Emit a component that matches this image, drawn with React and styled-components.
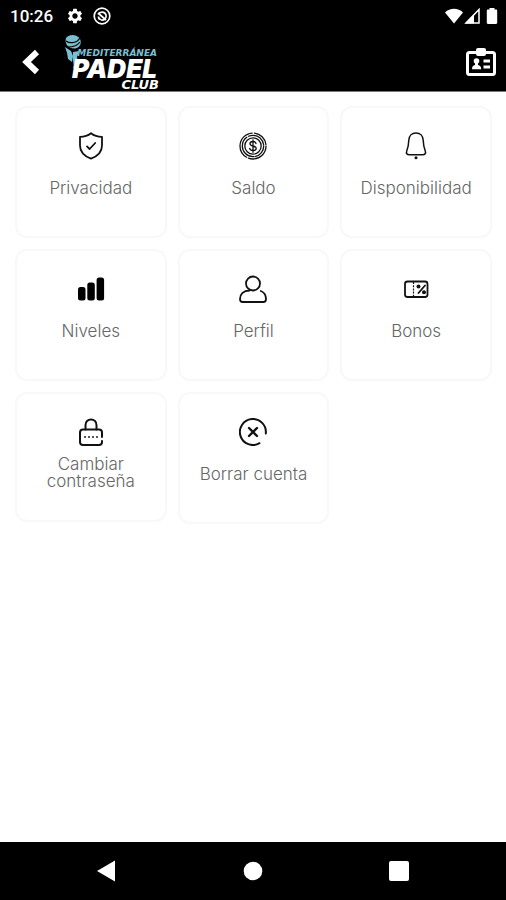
import styled, { createGlobalStyle } from "styled-components";
import { MdSettings } from "react-icons/md";

const GlobalStyle = createGlobalStyle`
  * {
    box-sizing: border-box;
  }
  body {
    margin: 0;
    background: #fff;
    font-family: Inter, "Liberation Sans", sans-serif;
  }
  button {
    border: 0;
    padding: 0;
    background: none;
    color: inherit;
    font: inherit;
    cursor: pointer;
  }
  svg {
    display: block;
  }
`;

const ShieldIcon = () => (
  <Icon viewBox="0 0 28 28">
    <path d="M14 1.200c3.200 2.600 6.800 3.600 11 3.600v8.700c0 6.200-4.200 10.600-11 13.200C7.200 24.100 3 19.700 3 13.500V4.800c4.200 0 7.800-1 11-3.600z" />
    <path d="M10 14.400l2.600 2.600 5.600-6" />
  </Icon>
);

const CoinIcon = () => (
  <Icon viewBox="0 0 28 28" $stroke={1.3}>
    <circle cx="14" cy="14" r="13" strokeDasharray="25 2 33 2.500 17 2.180" />
    <circle cx="14" cy="14" r="10.700" strokeDasharray="14 1.500 28 2 20 1.730" />
    <circle cx="14" cy="14" r="8.200" />
    <path d="M17 11.500c-.3-1.300-1.500-2-3-2-1.700 0-3 .8-3 2.200 0 3.200 6.200 1.400 6.200 4.600 0 1.400-1.400 2.300-3.200 2.300s-3-.8-3.300-2.200M14 7.800v12.500" />
  </Icon>
);

const BellIcon = () => (
  <Icon viewBox="0 0 28 28" $stroke={1.5}>
    <path d="M14 1c-4.300 0-7 3.200-7.200 7.200-.2 4.600-.6 7.200-2 10.600-1 2.500.2 4 2.600 4h13.200c2.400 0 3.600-1.500 2.600-4-1.400-3.400-1.800-6-2-10.600C21 4.200 18.300 1 14 1z" />
    <circle cx="14" cy="25.700" r="1.500" fill="currentColor" stroke="none" />
  </Icon>
);

const LevelsIcon = () => (
  <Icon viewBox="0 0 28 28">
    <g fill="#000" stroke="none">
      <rect x="1" y="12" width="7.500" height="13.500" rx="2.500" />
      <rect x="10.300" y="7.500" width="7.500" height="18" rx="2.500" />
      <rect x="19.600" y="2.500" width="7.500" height="23" rx="2.500" />
    </g>
  </Icon>
);

const ProfileIcon = () => (
  <Icon viewBox="0 0 28 28">
    <circle cx="14" cy="8.500" r="7" />
    <path d="M10.500 15.500C4.500 15.500 1 19 1 24c0 2 .8 3 2.600 3h20.800c1.800 0 2.600-1 2.600-3 0-3.800-1.800-6.700-5.200-8" />
  </Icon>
);

const VoucherIcon = () => (
  <Icon viewBox="0 0 28 28">
    <rect x="3" y="6.500" width="22.500" height="15.500" rx="2.500" />
    <path d="M11.500 7v15" strokeWidth="1.200" strokeDasharray="2 1.200" strokeLinecap="butt" />
    <path d="M16.500 18l6.500-7.500" />
    <g fill="currentColor" stroke="none">
      <circle cx="16.500" cy="11.500" r="2" />
      <circle cx="22" cy="17.200" r="2" />
    </g>
  </Icon>
);

const LockIcon = () => (
  <Icon viewBox="0 0 28 28" $stroke={2}>
    <path d="M8.500 11.500V7.200C8.500 3.700 10.800 1.500 14 1.500s5.500 2.200 5.500 5.700v4.300" />
    <path d="M25 19V14.500c0-2-1-3-3-3H6c-2 0-3 1-3 3V24c0 2 1 3 3 3h16c2 0 3-1 3-3v-1" />
    <path d="M7 19h14" strokeWidth="1.800" strokeDasharray="2 2" strokeLinecap="butt" opacity=".7" />
  </Icon>
);

const DeleteIcon = () => (
  <Icon viewBox="0 0 28 28" $stroke={2}>
    <path d="M26.800 15.500A13 13 0 1 0 20.500 25.200" />
    <path d="M10 10l8 8M18 10l-8 8" strokeWidth="2.400" />
  </Icon>
);

const Logo = () => (
  <LogoSvg viewBox="0 0 104 58" role="img" aria-label="Mediterránea Padel Club">
    <g fill="#79bfd3">
      <path d="M4 5C7 1 15 1 18 6c2 4 0 9-5 9.500C7 16 2 11 4 5z" />
      <path d="M3 14l6 4 2 5-1 6-4-3-1-6zM11 19l6-1-2 6 1 5-4 6-1-8zM11 34l4-5 4 1-4 3-3 3z" />
    </g>
    <path d="M4 8c4 3 11 2 14-3M6 14c4 0 9-1 12-5" fill="none" stroke="#000" strokeWidth="1.200" />
    <SmallLogoText x="95" y="23" fontSize="9" fill="#79bfd3">MEDITERRÁNEA</SmallLogoText>
    <BigLogoText x="10" y="45" fontSize="26" fill="#fff">PADEL</BigLogoText>
    <SmallLogoText x="97" y="56" fontSize="13" fill="#fff">CLUB</SmallLogoText>
  </LogoSvg>
);

const options = [
  { title: "Privacidad", icon: <ShieldIcon /> },
  { title: "Saldo", icon: <CoinIcon /> },
  { title: "Disponibilidad", icon: <BellIcon /> },
  { title: "Niveles", icon: <LevelsIcon /> },
  { title: "Perfil", icon: <ProfileIcon /> },
  { title: "Bonos", icon: <VoucherIcon /> },
  { title: "Cambiar contraseña", icon: <LockIcon />, multiline: true },
  { title: "Borrar cuenta", icon: <DeleteIcon /> },
];

const App = () => {
  return (
    <Screen>
      <GlobalStyle />
      <StatusBar>
        <span>10:26</span>
        <MdSettings size={18} />
        <svg width="18" height="18" viewBox="0 0 18 18" fill="none" stroke="#fff" strokeWidth="1.700">
          <circle cx="9" cy="9" r="7.800" />
          <path d="M5 7.500C7 4 12 4.500 13 8s-2 5.500-5 5M5 6l8 7M5.500 9.500c0 2 1 3 2.500 3" />
        </svg>
        <StatusIcons>
          <svg width="20" height="16" viewBox="0 0 20 16" fill="#fff">
            <path d="M1 4.500C6-.5 14-.5 19 4.500L10 15.500z" />
          </svg>
          <svg width="16" height="16" viewBox="0 0 16 16" fill="none" stroke="#fff">
            <path d="M2 15L15 1.500V15z" strokeWidth="1.500" />
            <path d="M1 15.500L10 6v9.500z" fill="#fff" stroke="none" />
          </svg>
          <Battery width="12" height="18" viewBox="0 0 12 18" fill="#fff">
            <path d="M3.500 1h5v1.500H10c.8 0 1.200.5 1.200 1.200v12.100c0 .7-.4 1.200-1.200 1.200H2c-.8 0-1.200-.5-1.200-1.200V3.700c0-.7.4-1.200 1.200-1.200h1.500z" />
          </Battery>
        </StatusIcons>
      </StatusBar>
      <Header>
        <HeaderButton type="button" aria-label="Volver">
          <svg width="20" height="26" viewBox="0 0 20 26" fill="none" stroke="#fff" strokeWidth="6">
            <path d="M17 3L6.500 13 17 23" />
          </svg>
        </HeaderButton>
        <Logo />
        <HeaderButton type="button" aria-label="Carnet">
          <svg width="30" height="28" viewBox="0 0 30 28" fill="#fff">
            <rect x="1.500" y="4.500" width="27" height="22" rx="2" fill="none" stroke="#fff" strokeWidth="3" />
            <rect x="10" y="0" width="10" height="8" rx="2" />
            <circle cx="10.500" cy="13" r="2.800" />
            <path d="M9 15h3v2c2 .3 3.200 1.400 3.200 4.200H6C6 18.400 7 17.300 9 17zM17.500 11.500H24v3h-6.500zM17.500 17.500H24v3h-6.500z" />
          </svg>
        </HeaderButton>
      </Header>
      <Grid>
        {options.map(({ title, icon, multiline }) => (
          <Card key={title} type="button">
            {icon}
            <Label $multiline={multiline}>{title}</Label>
          </Card>
        ))}
      </Grid>
      <NavBar>
        <NavButton type="button" aria-label="Atrás">
          <svg width="22" height="22" viewBox="0 0 22 22" fill="#fff">
            <path d="M19 .5v21L1 11z" />
          </svg>
        </NavButton>
        <NavButton type="button" aria-label="Inicio">
          <svg width="22" height="22" viewBox="0 0 22 22" fill="#fff">
            <circle cx="11" cy="11" r="9.300" />
          </svg>
        </NavButton>
        <NavButton type="button" aria-label="Recientes">
          <svg width="22" height="22" viewBox="0 0 22 22" fill="#fff">
            <rect x="1" y="1" width="20" height="20" rx="2" />
          </svg>
        </NavButton>
      </NavBar>
    </Screen>
  );
};

const Screen = styled.div`
  min-height: 100vh;
  display: flex;
  flex-direction: column;
`;

const StatusBar = styled.div`
  display: flex;
  align-items: center;
  gap: 9px;
  height: 32px;
  padding: 0 8px 0 10px;
  background: #000;
  color: #fff;
  font: 500 17px/32px Roboto, sans-serif;

  span {
    margin-right: 4px;
  }
`;

const StatusIcons = styled.div`
  display: flex;
  align-items: center;
  margin-left: auto;
`;

const Battery = styled.svg`
  margin-left: 6px;
`;

const Header = styled.header`
  display: flex;
  align-items: center;
  height: 60px;
  padding: 0 10px 0 20px;
  background: #000;
  border-bottom: 1px solid #777;
`;

const HeaderButton = styled.button`
  &:last-child {
    margin-left: auto;
  }
`;

const LogoSvg = styled.svg`
  width: 104px;
  height: 58px;
  margin-left: 22px;
`;

const BigLogoText = styled.text`
  font-family: Inter, sans-serif;
  font-weight: 900;
  font-style: italic;
`;

const SmallLogoText = styled.text`
  font-family: "DejaVu Sans", sans-serif;
  font-weight: 700;
  font-style: italic;
  text-anchor: end;
`;

const Grid = styled.main`
  flex: 1;
  display: grid;
  grid-template-columns: repeat(3, 1fr);
  align-content: start;
  align-items: start;
  gap: 11px;
  padding: 14px 14px 14px 15px;
`;

const Card = styled.button`
  display: flex;
  flex-direction: column;
  align-items: center;
  gap: 10px;
  padding: 24px 8px 30px;
  border: 2px solid #f8f8f8;
  border-radius: 12px;
  color: #111;
`;

const Icon = styled.svg`
  width: 28px;
  height: 28px;
  fill: none;
  stroke: currentColor;
  stroke-width: ${({ $stroke }) => $stroke || 1.8};
  stroke-linecap: round;
  stroke-linejoin: round;
`;

const Label = styled.span`
  color: #666;
  font-size: 17px;
  font-weight: 300;
  line-height: ${({ $multiline }) => ($multiline ? "17px" : "36px")};
`;

const NavBar = styled.nav`
  display: flex;
  align-items: center;
  justify-content: center;
  gap: 124px;
  height: 58px;
  background: #000;
`;

const NavButton = styled.button`
  display: block;
`;

export default App;
